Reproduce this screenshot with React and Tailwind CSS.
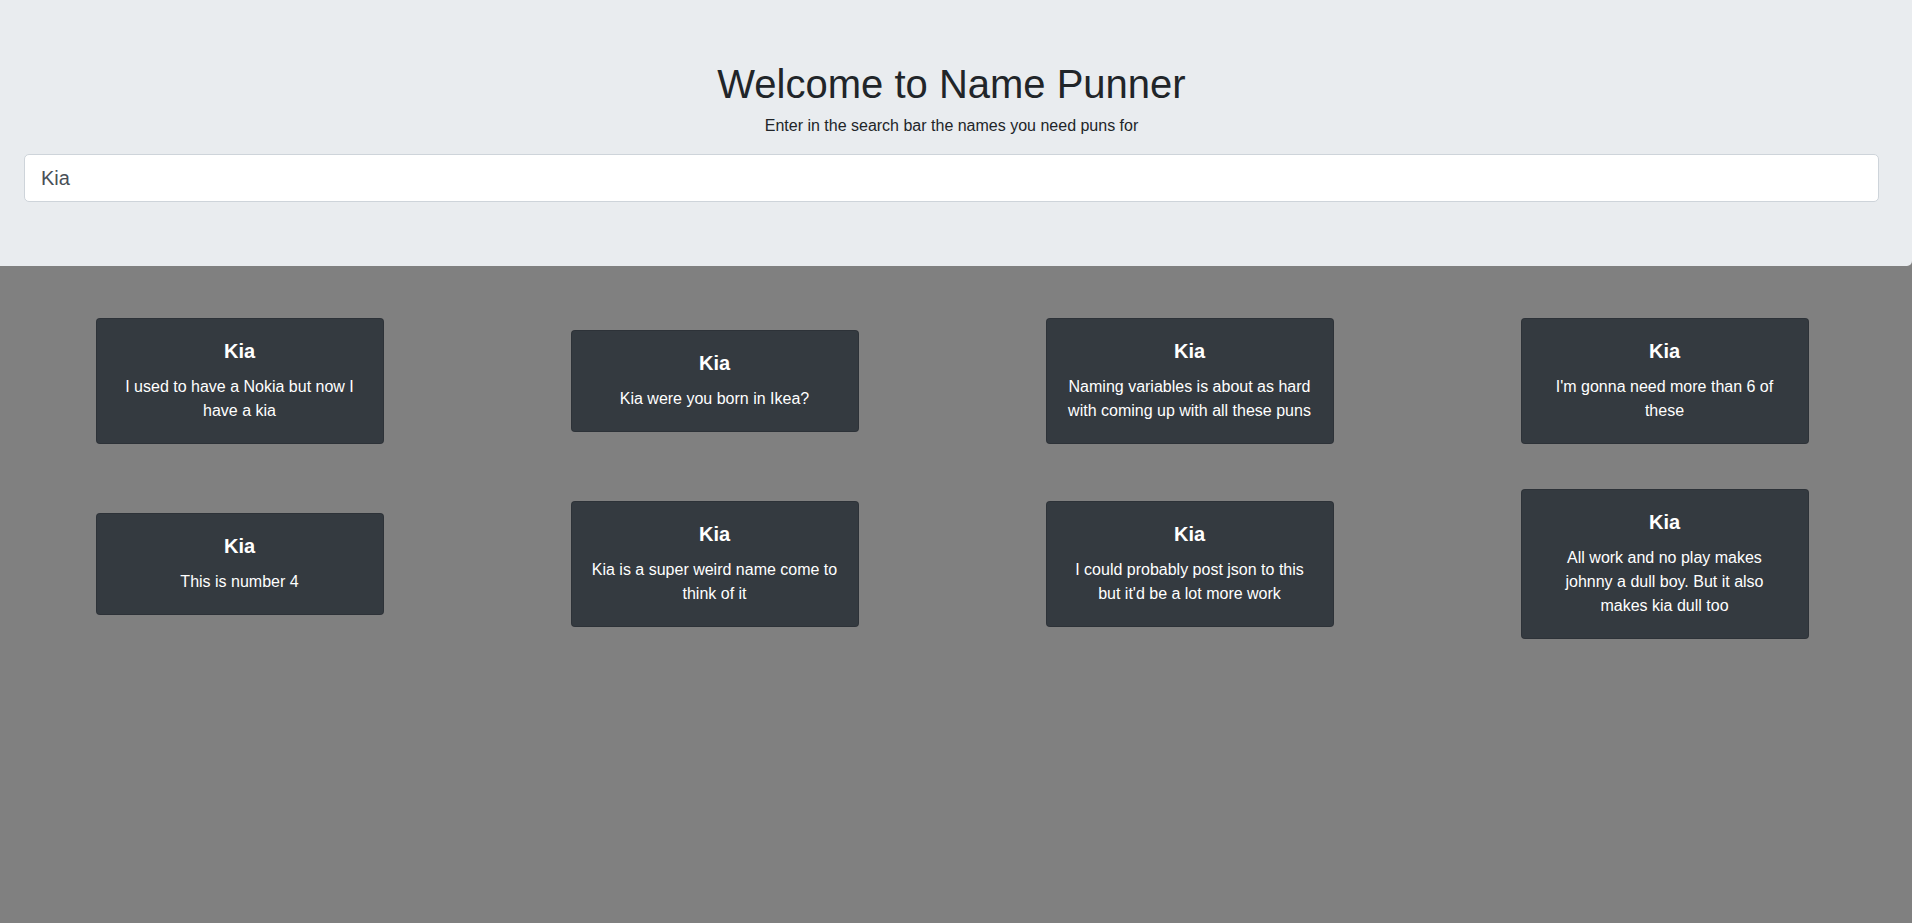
import { useState } from 'react'

const puns = [
  'I used to have a Nokia but now I have a kia',
  'Kia were you born in Ikea?',
  'Naming variables is about as hard with coming up with all these puns',
  "I'm gonna need more than 6 of these",
  'This is number 4',
  'Kia is a super weird name come to think of it',
  "I could probably post json to this but it'd be a lot more work",
  'All work and no play makes johnny a dull boy. But it also makes kia dull too',
]

const PunCard = ({ name, text }) => (
  <div className="w-72 rounded-[4px] border border-black/[.125] bg-[#343a40] p-5 text-center text-white">
    <h5 className="mb-3 text-xl font-bold leading-[1.2]">{name}</h5>
    <p className="text-base leading-6">{text}</p>
  </div>
)

const App = () => {
  const [query, setQuery] = useState('Kia')

  return (
    <div
      className="min-h-[923px] bg-[#808080] text-[#212529]"
      style={{ fontFamily: '"Liberation Sans", Arial, sans-serif' }}
    >
      <div className="rounded-br-[5px] bg-[#e9ecef] pb-16 pl-6 pr-[33px] pt-[60px] text-center">
        <h1 className="mb-[6px] text-[40px] font-medium leading-[48px]">Welcome to Name Punner</h1>
        <p className="mb-4 text-base leading-6">Enter in the search bar the names you need puns for</p>
        <input
          type="text"
          value={query}
          onChange={(e) => setQuery(e.target.value)}
          className="block h-12 w-full rounded-[5px] border border-[#ced4da] bg-white px-4 text-xl text-[#495057] outline-none"
        />
      </div>

      <div className="ml-[2px] grid w-[1900px] grid-cols-4 items-center justify-items-center gap-y-[45px] pt-[52px]">
        {puns.map((p, i) => (
          <PunCard key={i} name={query} text={p} />
        ))}
      </div>
    </div>
  )
}

export default App
